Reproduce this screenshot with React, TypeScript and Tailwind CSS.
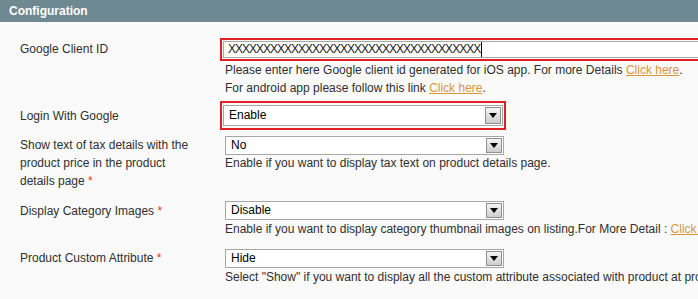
import React from 'react'

const Arrow = () => (
  <span className="absolute right-px top-px bottom-px w-[16px] border border-[#8f8f8f] bg-linear-to-b from-[#f4f4f4] to-[#cdcdcd] flex items-center justify-center">
    <svg width="8" height="5" viewBox="0 0 8 5">
      <path d="M0 0h8L4 5z" fill="#000" />
    </svg>
  </span>
)

function FakeSelect({ value, big = false }: { value: string; big?: boolean }) {
  return (
    <div
      className={`relative bg-white border border-[#a7a7a7] pl-[5px] text-[12px] text-black ${
        big ? 'w-[280px] h-[21px] leading-[19px]' : 'w-[279px] h-[19px] leading-[17px]'
      }`}
    >
      {value}
      <Arrow />
    </div>
  )
}

const Req = () => <span className="text-[#eb340a]"> *</span>
const A = ({ children }: { children: React.ReactNode }) => (
  <span className="text-[#d9963a] underline">{children}</span>
)

export default function App() {
  return (
    <div className="w-[698px] h-[299px] overflow-hidden bg-[#fafafa] font-['Liberation_Sans',Arial,sans-serif] text-[12px] leading-[18px] text-[#2f2f2f]">
      {/* header */}
      <div className="h-[22px] bg-[#6f8992] pl-[9px] text-white font-bold text-[12px] leading-[23px]">
        Configuration
      </div>

      {/* Google Client ID */}
      <div className="flex pt-[16px]">
        <div className="w-[220px] shrink-0 pl-[20px] pt-[2px]">Google Client ID</div>
        <div className="flex-1 min-w-0">
          <div className="w-[520px] border-2 border-[#e31e24] p-px">
            <div className="relative h-[17px] border border-[#a9a9a9] bg-white pl-[4px] leading-[15px] text-[#222] tracking-[-1px] whitespace-nowrap">
              XXXXXXXXXXXXXXXXXXXXXXXXXXXXXXXXXXXX
              <span className="inline-block w-px h-[15px] bg-black align-top ml-[1px]" />
            </div>
          </div>
          <div className="ml-[5px] whitespace-nowrap">
            Please enter here Google client id generated for iOS app. For more Details <A>Click here</A>.
          </div>
          <div className="ml-[5px] whitespace-nowrap">
            For android app please follow this link <A>Click here</A>.
          </div>
        </div>
      </div>

      {/* Login With Google */}
      <div className="flex pt-[4px]">
        <div className="w-[220px] shrink-0 pl-[20px] pt-[6px]">Login With Google</div>
        <div className="flex-1 min-w-0">
          <div className="w-[286px] border-2 border-[#e31e24] px-px py-[2px]">
            <FakeSelect value="Enable" big />
          </div>
        </div>
      </div>

      {/* Tax text */}
      <div className="flex pt-[6px]">
        <div className="w-[220px] shrink-0 pl-[20px] pr-[28px]">
          Show text of tax details with the product price in the product details page<Req />
        </div>
        <div className="flex-1 min-w-0 ml-[5px]">
          <FakeSelect value="No" />
          <div className="whitespace-nowrap -mt-px">Enable if you want to display tax text on product details page.</div>
        </div>
      </div>

      {/* Display Category Images */}
      <div className="flex pt-[11px]">
        <div className="w-[220px] shrink-0 pl-[20px] pt-[1px]">
          Display Category Images<Req />
        </div>
        <div className="flex-1 min-w-0 ml-[5px]">
          <FakeSelect value="Disable" />
          <div className="whitespace-nowrap">
            Enable if you want to display category thumbnail images on listing.For More Detail : <A>Click here</A>
          </div>
        </div>
      </div>

      {/* Product Custom Attribute */}
      <div className="flex pt-[11px]">
        <div className="w-[220px] shrink-0 pl-[20px]">
          Product Custom Attribute<Req />
        </div>
        <div className="flex-1 min-w-0 ml-[5px]">
          <FakeSelect value="Hide" />
          <div className="whitespace-nowrap">
            Select "Show" if you want to display all the custom attribute associated with product at product page.
          </div>
        </div>
      </div>
    </div>
  )
}
